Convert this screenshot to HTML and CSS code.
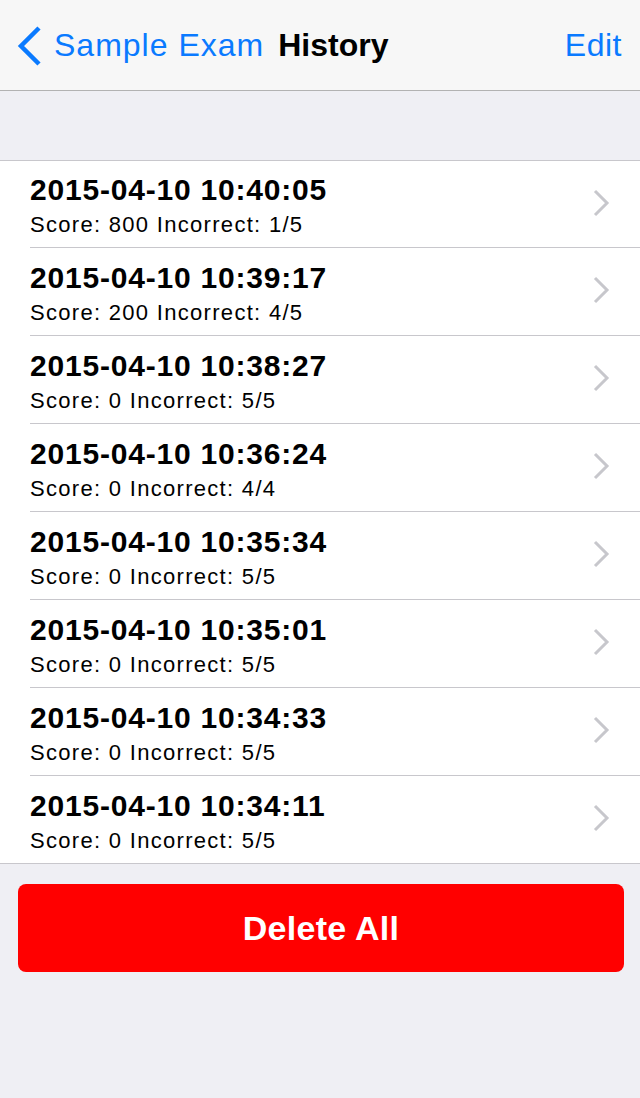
FILE: index.html
```html
<!DOCTYPE html>
<html>
<head>
<meta charset="utf-8">
<title>History</title>
<link rel="stylesheet" href="styles.css">
</head>
<body>
<header class="navbar">
  <a class="back">
    <svg class="back-chevron" width="26" height="44" viewBox="0 0 26 44">
      <path d="M23 4 L5 22 L23 40" fill="none" stroke="#0a7aff" stroke-width="4.5" stroke-linecap="butt" stroke-linejoin="miter"/>
    </svg>
    <span class="back-label">Sample Exam</span>
  </a>
  <h1 class="title">History</h1>
  <a class="edit">Edit</a>
</header>
<div class="spacer"></div>
<ul class="list">
  <li class="row"><div class="text"><div class="row-title">2015-04-10 10:40:05</div><div class="row-sub">Score: 800 Incorrect: 1/5</div></div><svg class="chev" width="18" height="28" viewBox="0 0 18 28"><path d="M3 2 L15 14 L3 26" fill="none" stroke="#c7c7cc" stroke-width="3"/></svg></li>
  <li class="row"><div class="text"><div class="row-title">2015-04-10 10:39:17</div><div class="row-sub">Score: 200 Incorrect: 4/5</div></div><svg class="chev" width="18" height="28" viewBox="0 0 18 28"><path d="M3 2 L15 14 L3 26" fill="none" stroke="#c7c7cc" stroke-width="3"/></svg></li>
  <li class="row"><div class="text"><div class="row-title">2015-04-10 10:38:27</div><div class="row-sub">Score: 0 Incorrect: 5/5</div></div><svg class="chev" width="18" height="28" viewBox="0 0 18 28"><path d="M3 2 L15 14 L3 26" fill="none" stroke="#c7c7cc" stroke-width="3"/></svg></li>
  <li class="row"><div class="text"><div class="row-title">2015-04-10 10:36:24</div><div class="row-sub">Score: 0 Incorrect: 4/4</div></div><svg class="chev" width="18" height="28" viewBox="0 0 18 28"><path d="M3 2 L15 14 L3 26" fill="none" stroke="#c7c7cc" stroke-width="3"/></svg></li>
  <li class="row"><div class="text"><div class="row-title">2015-04-10 10:35:34</div><div class="row-sub">Score: 0 Incorrect: 5/5</div></div><svg class="chev" width="18" height="28" viewBox="0 0 18 28"><path d="M3 2 L15 14 L3 26" fill="none" stroke="#c7c7cc" stroke-width="3"/></svg></li>
  <li class="row"><div class="text"><div class="row-title">2015-04-10 10:35:01</div><div class="row-sub">Score: 0 Incorrect: 5/5</div></div><svg class="chev" width="18" height="28" viewBox="0 0 18 28"><path d="M3 2 L15 14 L3 26" fill="none" stroke="#c7c7cc" stroke-width="3"/></svg></li>
  <li class="row"><div class="text"><div class="row-title">2015-04-10 10:34:33</div><div class="row-sub">Score: 0 Incorrect: 5/5</div></div><svg class="chev" width="18" height="28" viewBox="0 0 18 28"><path d="M3 2 L15 14 L3 26" fill="none" stroke="#c7c7cc" stroke-width="3"/></svg></li>
  <li class="row"><div class="text"><div class="row-title">2015-04-10 10:34:11</div><div class="row-sub">Score: 0 Incorrect: 5/5</div></div><svg class="chev" width="18" height="28" viewBox="0 0 18 28"><path d="M3 2 L15 14 L3 26" fill="none" stroke="#c7c7cc" stroke-width="3"/></svg></li>
</ul>
<div class="actions">
  <button class="delete-all">Delete All</button>
</div>
</body>
</html>
```

FILE: styles.css
```css
* { box-sizing: border-box; }
html, body {
  margin: 0;
  padding: 0;
  background: #efeff4;
  font-family: "Liberation Sans", Arial, Helvetica, sans-serif;
  height: 100%;
}
.navbar {
  height: 91px;
  background: #f7f7f7;
  border-bottom: 1px solid #b2b2b2;
  display: flex;
  align-items: center;
  padding: 0 18px 0 16px;
}
.back {
  display: flex;
  align-items: center;
  color: #0a7aff;
  text-decoration: none;
}
.back-chevron {
  display: block;
  margin-top: 2px;
}
.back-label {
  font-size: 32px;
  letter-spacing: 1px;
  margin-left: 12px;
}
.title {
  margin: 0 0 0 14px;
  font-size: 32px;
  font-weight: bold;
  color: #000;
}
.edit {
  margin-left: auto;
  font-size: 32px;
  color: #0a7aff;
  letter-spacing: 0.5px;
}
.spacer {
  height: 69px;
}
.list {
  list-style: none;
  margin: 0;
  padding: 0;
  background: #fff;
  border-top: 1px solid #c8c7cc;
  border-bottom: 1px solid #c8c7cc;
}
.row {
  height: 88px;
  display: flex;
  align-items: center;
  padding-left: 30px;
  padding-right: 30px;
  position: relative;
}
.row + .row::before {
  content: "";
  position: absolute;
  top: 0;
  left: 30px;
  right: 0;
  border-top: 1px solid #c8c7cc;
}
.row:first-child { height: 86px; }
.text {
  flex: 1;
  align-self: flex-start;
  padding-top: 14px;
}
.row:first-child .text { padding-top: 12px; }
.row-title {
  font-size: 30px;
  font-weight: bold;
  line-height: 34px;
  letter-spacing: 0.8px;
  color: #000;
}
.row-sub {
  font-size: 22px;
  line-height: 26px;
  letter-spacing: 1.3px;
  margin-top: 5px;
  color: #000;
}
.chev {
  display: block;
  margin-top: -3px;
}
.actions {
  padding: 20px 16px 0 18px;
}
.delete-all {
  display: block;
  width: 100%;
  height: 88px;
  border: none;
  border-radius: 8px;
  background: #ff0000;
  color: #fff;
  font-family: "Liberation Sans", Arial, Helvetica, sans-serif;
  font-size: 34px;
  font-weight: bold;
  letter-spacing: 0.3px;
  padding: 0;
}
```
